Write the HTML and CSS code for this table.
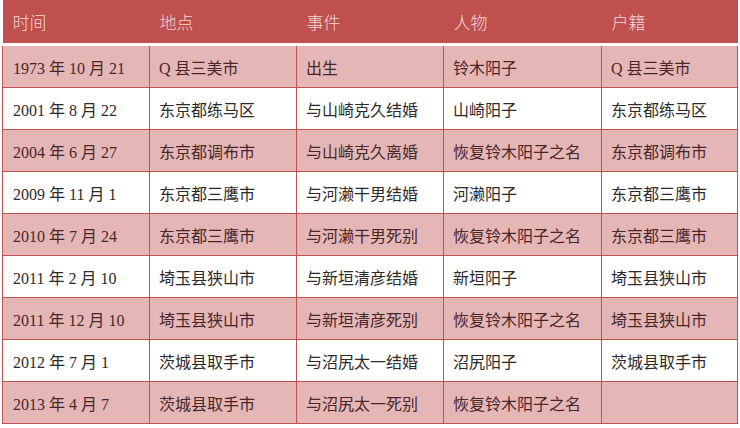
FILE: index.html
```html
<!DOCTYPE html>
<html lang="zh">
<head>
<meta charset="utf-8">
<link rel="stylesheet" href="styles.css">
</head>
<body>
<table class="tbl">
  <colgroup>
    <col class="c1"><col class="c2"><col class="c3"><col class="c4"><col class="c5">
  </colgroup>
  <thead>
    <tr><th>时间</th><th>地点</th><th>事件</th><th>人物</th><th>户籍</th></tr>
  </thead>
  <tbody>
    <tr class="pink"><td>1973 年 10 月 21</td><td>Q 县三美市</td><td>出生</td><td>铃木阳子</td><td>Q 县三美市</td></tr>
    <tr><td>2001 年 8 月 22</td><td>东京都练马区</td><td>与山崎克久结婚</td><td>山崎阳子</td><td>东京都练马区</td></tr>
    <tr class="pink"><td>2004 年 6 月 27</td><td>东京都调布市</td><td>与山崎克久离婚</td><td>恢复铃木阳子之名</td><td>东京都调布市</td></tr>
    <tr><td>2009 年 11 月 1</td><td>东京都三鹰市</td><td>与河濑干男结婚</td><td>河濑阳子</td><td>东京都三鹰市</td></tr>
    <tr class="pink"><td>2010 年 7 月 24</td><td>东京都三鹰市</td><td>与河濑干男死别</td><td>恢复铃木阳子之名</td><td>东京都三鹰市</td></tr>
    <tr><td>2011 年 2 月 10</td><td>埼玉县狭山市</td><td>与新垣清彦结婚</td><td>新垣阳子</td><td>埼玉县狭山市</td></tr>
    <tr class="pink"><td>2011 年 12 月 10</td><td>埼玉县狭山市</td><td>与新垣清彦死别</td><td>恢复铃木阳子之名</td><td>埼玉县狭山市</td></tr>
    <tr><td>2012 年 7 月 1</td><td>茨城县取手市</td><td>与沼尻太一结婚</td><td>沼尻阳子</td><td>茨城县取手市</td></tr>
    <tr class="pink"><td>2013 年 4 月 7</td><td>茨城县取手市</td><td>与沼尻太一死别</td><td>恢复铃木阳子之名</td><td></td></tr>
  </tbody>
</table>
</body>
</html>
```

FILE: styles.css
```css
html, body {
  margin: 0;
  padding: 0;
  background: #ffffff;
}
.tbl {
  margin-left: 2px;
  border-collapse: collapse;
  table-layout: fixed;
  width: 735px;
  font-family: "Liberation Serif", "Noto Sans CJK SC", serif;
  font-size: 16px;
}
.c1 { width: 147px; }
.c2 { width: 147px; }
.c3 { width: 147px; }
.c4 { width: 158px; }
.c5 { width: 136px; }
.tbl th {
  background: #c0504d;
  color: #f4d6d6;
  font-family: "Noto Sans CJK SC", sans-serif;
  font-weight: 300;
  font-size: 17px;
  text-align: left;
  height: 43px;
  padding: 0 0 0 10px;
  border-bottom: 3px solid #ffffff;
  vertical-align: middle;
}
.tbl td {
  height: 41px;
  padding: 0 0 0 9px;
  border: 1px solid #c0504d;
  color: #2e2a2a;
  vertical-align: middle;
  white-space: nowrap;
}
.tbl td:first-child { padding-left: 10px; }
.tbl tr.pink td {
  background: #e5b6b6;
  color: #48272a;
}
```
